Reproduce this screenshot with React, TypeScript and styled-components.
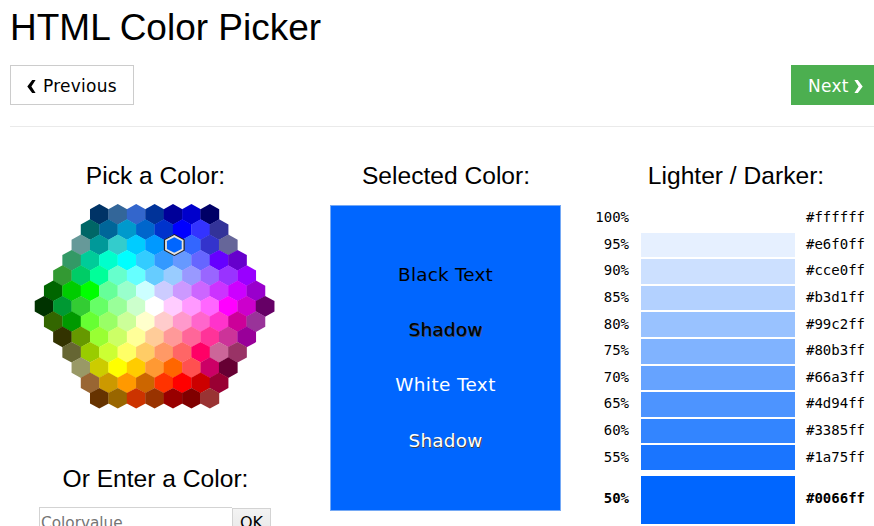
import React from "react";
import styled, { createGlobalStyle, css } from "styled-components";

const GlobalStyle = createGlobalStyle`
  *, *::before, *::after { box-sizing: border-box; }
  body {
    margin: 0;
    background: #fff;
    color: #000;
    font-family: "DejaVu Sans", Verdana, sans-serif;
    overflow: hidden;
  }
`;

const Page = styled.main`
  width: 874px;
  height: 526px;
  padding-left: 10px;
  overflow: hidden;
`;

const Title = styled.h1`
  margin: 0;
  height: 65px;
  padding-top: 6px;
  font: 400 37px/44px "Liberation Sans", Arial, sans-serif;
  white-space: nowrap;
`;

const NavBar = styled.nav`
  display: flex;
  justify-content: space-between;
  height: 62px;
  padding-bottom: 21px;
  border-bottom: 1px solid #eaeaea;
`;

const NavButton = styled.button<{ $primary?: boolean }>`
  display: flex;
  align-items: center;
  gap: ${(p) => (p.$primary ? 5 : 7)}px;
  height: 40px;
  padding: 2px 0 0 16px;
  width: ${(p) => (p.$primary ? 83 : 124)}px;
  border: 1px solid ${(p) => (p.$primary ? "#4caf50" : "#ccc")};
  background: ${(p) => (p.$primary ? "#4caf50" : "#fff")};
  color: ${(p) => (p.$primary ? "#fff" : "#000")};
  font: 400 17px/24px "DejaVu Sans", Verdana, sans-serif;
  letter-spacing: 0.25px;
  white-space: nowrap;
`;

const Chevron = styled.svg`
  width: 9px;
  height: 13px;
  flex: none;
  fill: currentColor;
`;

const Columns = styled.div`
  display: grid;
  grid-template-columns: 290px 291px 283px;
`;

const Column = styled.section`
  display: flex;
  flex-direction: column;
  align-items: center;
  padding-top: 34px;
`;

const Heading = styled.h3<{ $indent?: number }>`
  margin: 0;
  height: 30px;
  padding-left: ${(p) => p.$indent ?? 0}px;
  font: 400 24.6px/30px "Liberation Sans", Arial, sans-serif;
  white-space: nowrap;
`;

const ColorMap = styled.svg`
  display: block;
  width: 242px;
  height: 206px;
  margin: 12px 0 55px;
`;

const EntryRow = styled.form`
  display: flex;
  width: 232px;
  height: 36px;
  margin-top: 13px;
`;

const ColorInput = styled.input`
  width: 193px;
  height: 36px;
  padding: 0 0 5px 1px;
  border: 1px solid #d3d3d3;
  border-right: 0;
  outline: 0;
  font: 400 15.3px "DejaVu Sans", Verdana, sans-serif;
  &::placeholder { color: #757575; opacity: 1; }
`;

const OkButton = styled.button`
  width: 39px;
  height: 36px;
  margin-top: 1px;
  padding: 0 0 7px;
  border: 1px solid #d3d3d3;
  background: linear-gradient(#f3f3f3, #e4e4e4);
  color: #000;
  font: 400 16px "DejaVu Sans", Verdana, sans-serif;
`;

const Preview = styled.div`
  display: flex;
  flex-direction: column;
  align-items: center;
  width: 231px;
  height: 306px;
  margin-top: 14px;
  padding-top: 42px;
  border: 1px solid #75a9f5;
  background: #0066ff;
`;

const Sample = styled.div<{ $light?: boolean; $shadow?: boolean }>`
  height: 55.2px;
  font-size: 18.4px;
  line-height: 54px;
  letter-spacing: ${(p) => (p.$light && !p.$shadow ? 0.4 : 0.2)}px;
  color: ${(p) => (p.$light ? "#fff" : "#000")};
  ${(p) => p.$shadow && css`text-shadow: 1px 1px 0 #444;`}
`;

const Shades = styled.div`
  width: 283px;
  padding-right: 1px;
  margin-top: 13px;
`;

const ShadeRow = styled.div<{ $selected?: boolean }>`
  display: grid;
  grid-template-columns: 38px 155px 1fr;
  column-gap: 11px;
  align-items: center;
  height: ${(p) => (p.$selected ? 57 : 26.6)}px;
  font: ${(p) => (p.$selected ? 700 : 400)} 14px/20px "DejaVu Sans Mono", Consolas, monospace;
`;

const Percent = styled.span`
  text-align: right;
`;

const Swatch = styled.span<{ $color: string; $selected?: boolean }>`
  height: ${(p) => (p.$selected ? 48 : 24.6)}px;
  margin: ${(p) => (p.$selected ? "3px 0 0 1px" : "2px 0 0 1px")};
  background: ${(p) => p.$color};
`;

const ROWS: string[] = [
  "003366 336699 3366cc 003399 000099 0000cc 000066",
  "006666 006699 0099cc 0066cc 0033cc 0000ff 3333ff 333399",
  "669999 009999 33cccc 00ccff 0099ff 0066ff 3366ff 3333cc 666699",
  "339966 00cc99 00ffcc 00ffff 33ccff 3399ff 6699ff 6666ff 6600ff 6600cc",
  "339933 00cc66 00ff99 66ffcc 66ffff 66ccff 99ccff 9999ff 9966ff 9933ff 9900ff",
  "006600 00cc00 00ff00 66ff99 99ffcc ccffff ccccff cc99ff cc66ff cc33ff cc00ff 9900cc",
  "003300 009933 33cc33 66ff66 99ff99 ccffcc ffffff ffccff ff99ff ff66ff ff00ff cc00cc 660066",
  "336600 009900 66ff33 99ff66 ccff99 ffffcc ffcccc ff99cc ff66cc ff33cc cc0099 993399",
  "333300 669900 99ff33 ccff66 ffff99 ffcc99 ff9999 ff6699 ff3399 cc3399 990099",
  "666633 99cc00 ccff33 ffff66 ffcc66 ff9966 ff6666 ff0066 cc6699 993366",
  "999966 cccc00 ffff00 ffcc00 ff9933 ff6600 ff5050 cc0066 660033",
  "996633 cc9900 ff9900 cc6600 ff3300 ff0000 cc0000 990033",
  "663300 996600 cc3300 993300 990000 800000 993333",
];

const SHADES: [string, string][] = [
  ["100%", "#ffffff"],
  ["95%", "#e6f0ff"],
  ["90%", "#cce0ff"],
  ["85%", "#b3d1ff"],
  ["80%", "#99c2ff"],
  ["75%", "#80b3ff"],
  ["70%", "#66a3ff"],
  ["65%", "#4d94ff"],
  ["60%", "#3385ff"],
  ["55%", "#1a75ff"],
  ["50%", "#0066ff"],
];

const PITCH_X = 18.42;
const PITCH_Y = 15.33;

const hexagon = (x: number, y: number, w: number, h: number) =>
  [
    [x, y - h / 2],
    [x + w / 2, y - h / 4],
    [x + w / 2, y + h / 4],
    [x, y + h / 2],
    [x - w / 2, y + h / 4],
    [x - w / 2, y - h / 4],
  ]
    .map(([px, py]) => `${px.toFixed(2)},${py.toFixed(2)}`)
    .join(" ");

function HexMap() {
  return (
    <ColorMap viewBox="0 0 242 206">
      {ROWS.map((row, r) => {
        const colors = row.split(" ");
        return colors.map((color, i) => (
          <polygon
            key={`${r}-${i}`}
            points={hexagon(
              120.6 + (i - (colors.length - 1) / 2) * PITCH_X,
              11.3 + r * PITCH_Y,
              18.7,
              20.7
            )}
            fill={`#${color}`}
          />
        ));
      })}
      <polygon points={hexagon(140.3, 42, 18.6, 19.6)} fill="#0066ff" stroke="#222" strokeWidth="2.2" />
      <polygon points={hexagon(140.3, 42, 16.6, 17.8)} fill="none" stroke="#e4e4e4" strokeWidth="1.8" />
    </ColorMap>
  );
}

export default function App() {
  return (
    <>
      <GlobalStyle />
      <Page>
        <Title>HTML Color Picker</Title>
        <NavBar>
          <NavButton>
            <Chevron viewBox="0 0 9 13">
              <path d="M5.2 0H8.6L4.4 6.5 8.6 13H5.2L0.3 6.5Z" />
            </Chevron>
            Previous
          </NavButton>
          <NavButton $primary>
            Next
            <Chevron viewBox="0 0 9 13">
              <path d="M3.8 0H0.4L4.6 6.5 0.4 13H3.8L8.7 6.5Z" />
            </Chevron>
          </NavButton>
        </NavBar>
        <Columns>
          <Column>
            <Heading $indent={1}>Pick a Color:</Heading>
            <HexMap />
            <Heading $indent={1}>Or Enter a Color:</Heading>
            <EntryRow>
              <ColorInput placeholder="Colorvalue" />
              <OkButton type="button">OK</OkButton>
            </EntryRow>
          </Column>
          <Column>
            <Heading $indent={1}>Selected Color:</Heading>
            <Preview>
              <Sample>Black Text</Sample>
              <Sample $shadow>Shadow</Sample>
              <Sample $light>White Text</Sample>
              <Sample $light $shadow>Shadow</Sample>
            </Preview>
          </Column>
          <Column>
            <Heading $indent={7}>Lighter / Darker:</Heading>
            <Shades>
              {SHADES.map(([percent, color]) => {
                const selected = percent === "50%";
                return (
                  <ShadeRow key={percent} $selected={selected}>
                    <Percent>{percent}</Percent>
                    <Swatch $color={color} $selected={selected} />
                    <span>{color}</span>
                  </ShadeRow>
                );
              })}
            </Shades>
          </Column>
        </Columns>
      </Page>
    </>
  );
}
